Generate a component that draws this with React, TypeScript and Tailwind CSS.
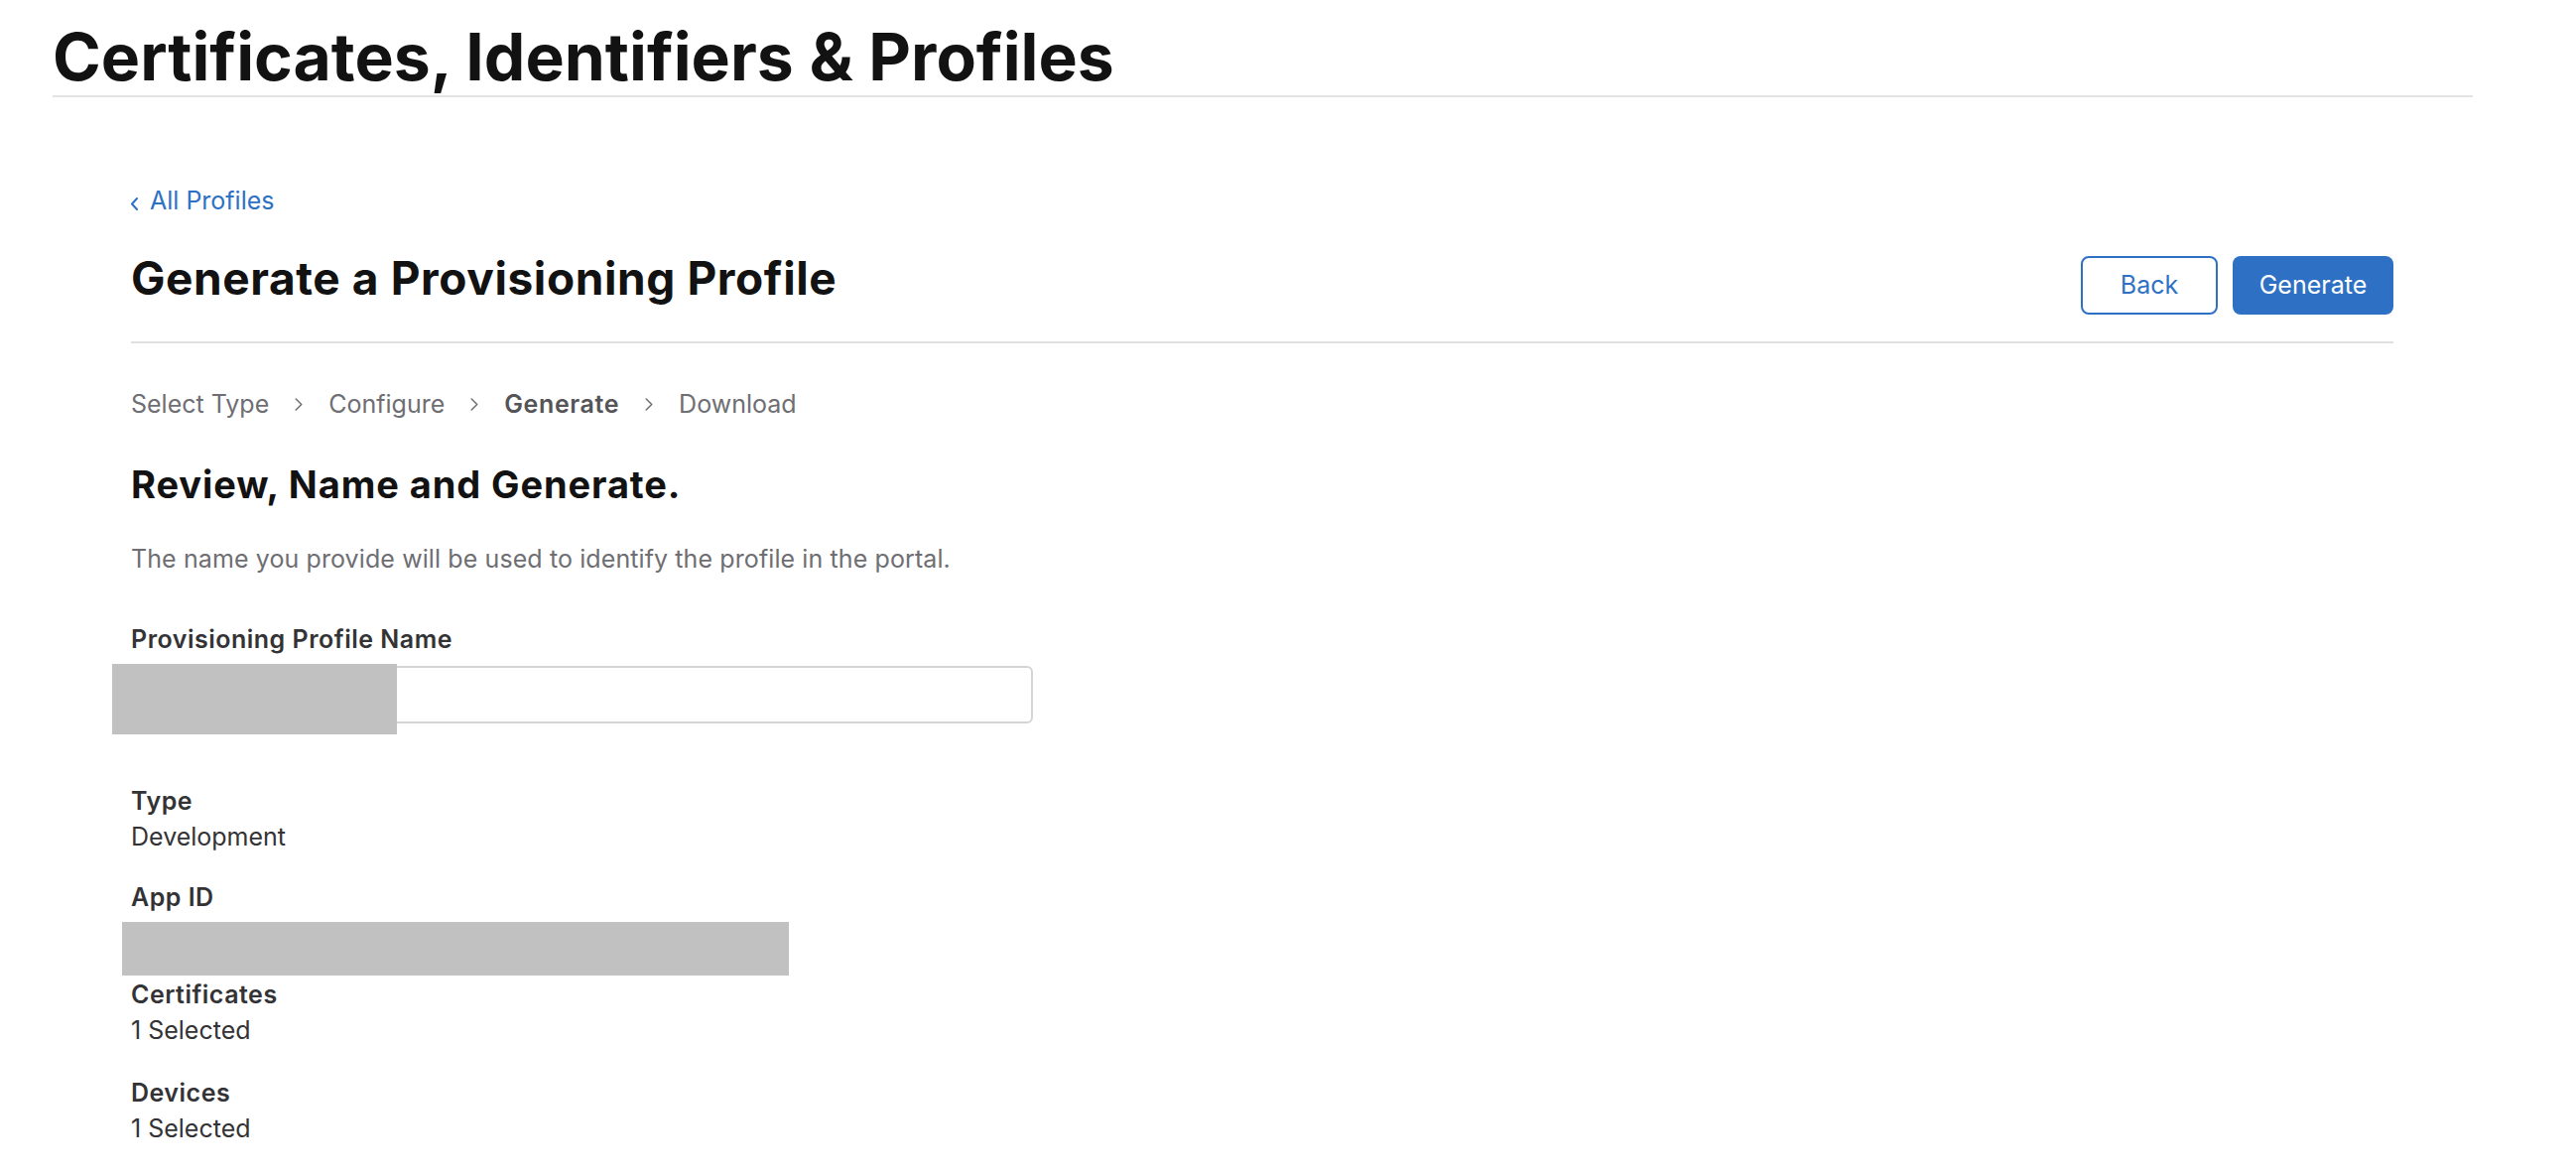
import React from 'react';

const Chevron = () => (
  <svg className="mx-[26px] h-[13px] w-[8px] shrink-0" viewBox="0 0 8 14" fill="none">
    <polyline points="1,1 7,7 1,13" stroke="#6e6e73" strokeWidth="1.6" strokeLinecap="round" strokeLinejoin="round" />
  </svg>
);

const steps = [
  { label: 'Select Type', current: false },
  { label: 'Configure', current: false },
  { label: 'Generate', current: true },
  { label: 'Download', current: false }
];

const Detail = ({ label, value }: { label: string; value: string }) => (
  <div className="flex flex-col">
    <span className="text-[25px] leading-[36px] font-semibold tracking-[0.5px] text-[#333336]">{label}</span>
    <span className="text-[25px] leading-[36px] text-[#333336]">{value}</span>
  </div>
);

export default function App() {
  return (
    <div className="min-h-screen bg-white px-[53px] font-['Inter','Noto_Sans',sans-serif] text-[#1d1d1f]">
      <header className="w-[2439px] border-b-2 border-[#e3e3e3] pt-[24px] pb-[6px]">
        <h1 className="text-[66px] leading-[66px] font-bold text-[#121212]">
          Certificates, Identifiers &amp; Profiles
        </h1>
      </header>

      <main className="ml-[79px] w-[2280px] pt-[86px]">
        <a href="#" className="flex items-center text-[25px] leading-[36px] text-[#2e71c4]">
          <svg className="mr-[12px] mt-[6px] h-[13px] w-[7px]" viewBox="0 0 7 13" fill="none">
            <polyline points="6,1 1,6.5 6,12" stroke="#2e71c4" strokeWidth="2" strokeLinecap="round" strokeLinejoin="round" />
          </svg>
          All Profiles
        </a>

        <div className="mt-[33px] flex items-start justify-between border-b-2 border-[#e0e0e0] pb-[27px]">
          <h2 className="text-[46px] leading-[54px] font-bold tracking-[0.6px] text-[#121212]">
            Generate a Provisioning Profile
          </h2>
          <div className="mt-[5px] flex gap-[15px]">
            <button
              type="button"
              className="flex h-[59px] w-[138px] items-center justify-center rounded-[8px] border-2 border-[#2e71c4] bg-white text-[25px] text-[#2e71c4]"
            >
              Back
            </button>
            <button
              type="button"
              className="flex h-[59px] w-[162px] items-center justify-center rounded-[8px] bg-[#2e71c4] text-[25px] text-white"
            >
              Generate
            </button>
          </div>
        </div>

        <nav className="mt-[43px] flex items-center text-[25px] leading-[36px]">
          {steps.map((step, i) => (
            <React.Fragment key={step.label}>
              {i > 0 && <Chevron />}
              <span className={step.current ? 'font-semibold tracking-[0.6px] text-[#555558]' : 'text-[#6e6e73]'}>
                {step.label}
              </span>
            </React.Fragment>
          ))}
        </nav>

        <h3 className="mt-[41px] text-[38px] leading-[44px] font-bold tracking-[0.9px] text-[#121212]">
          Review, Name and Generate.
        </h3>

        <p className="mt-[35px] text-[25px] leading-[36px] tracking-[0.1px] text-[#6e6e73]">
          The name you provide will be used to identify the profile in the portal.
        </p>

        <label className="mt-[45px] block text-[25px] leading-[36px] font-semibold tracking-[0.5px] text-[#333336]">
          Provisioning Profile Name
        </label>
        <div className="relative mt-[9px] w-[909px]">
          <input
            type="text"
            className="block h-[58px] w-full rounded-[6px] border-2 border-[#d4d4d6] bg-white px-[14px] text-[25px] outline-none"
          />
          <div className="absolute left-[-19px] top-[-2px] h-[71px] w-[287px] bg-[#c1c1c1]" />
        </div>

        <div className="mt-[60px] flex flex-col">
          <Detail label="Type" value="Development" />
          <div className="mt-[25px] flex flex-col">
            <span className="text-[25px] leading-[36px] font-semibold tracking-[0.5px] text-[#333336]">App ID</span>
            <div className="ml-[-9px] mt-[7px] h-[54px] w-[672px] bg-[#c1c1c1]" />
          </div>
          <div className="mt-[1px]">
            <Detail label="Certificates" value="1 Selected" />
          </div>
          <div className="mt-[27px]">
            <Detail label="Devices" value="1 Selected" />
          </div>
        </div>
      </main>
    </div>
  );
}
